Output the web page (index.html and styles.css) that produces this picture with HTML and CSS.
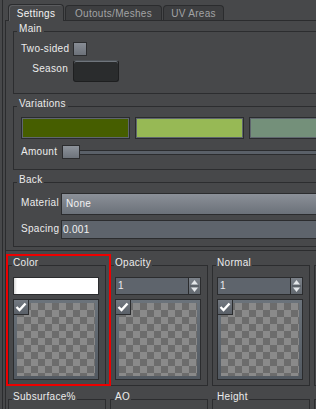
FILE: index.html
```
<!DOCTYPE html>
<html lang="en">
<head>
  <meta charset="UTF-8" />
  <title>Settings</title>
  <link rel="stylesheet" href="styles.css">
</head>
<body>

<div class="window">
  <div class="tabs">
    <div class="tab active">Settings</div>
    <div class="tab">Outouts/Meshes</div>
    <div class="tab">UV Areas</div>
  </div>

  <div class="page">
    <div class="group main">
      <div class="group-title">Main</div>
      <div class="row">
        <span class="label">Two-sided</span>
        <span class="checkbox"></span>
      </div>
      <div class="row season-row">
        <span class="label">Season</span>
        <span class="season"></span>
      </div>
    </div>

    <div class="group variations">
      <div class="group-title">Variations</div>
      <div class="swatches">
        <div class="swatch dark-green"></div>
        <div class="swatch light-green"></div>
        <div class="swatch grey-green"></div>
      </div>
      <div class="row amount">
        <span class="label">Amount</span>
        <div class="slider">
          <span class="handle"></span>
          <span class="track"></span>
        </div>
      </div>
    </div>

    <div class="group back">
      <div class="group-title">Back</div>
      <div class="row">
        <span class="label">Material</span>
        <div class="field combo">None</div>
      </div>
      <div class="row">
        <span class="label">Spacing</span>
        <div class="field flat">0.001</div>
      </div>
    </div>

    <div class="textures">
      <div class="tex-grid">
        <div class="tex">
          <div class="group-title">Color</div>
          <div class="color-field"></div>
          <div class="preview">
            <div class="checker"></div>
            <span class="check"><svg width="14" height="14" viewBox="0 0 14 14"><polyline points="2.5,7 5.5,10 11.5,3.5" fill="none" stroke="#fff" stroke-width="2.4"/></svg></span>
          </div>
        </div>
        <div class="tex">
          <div class="group-title">Opacity</div>
          <div class="num">
            <span>1</span>
            <span class="spin"><svg width="11" height="16" viewBox="0 0 11 16"><polygon points="5.5,2 9,6.5 2,6.5" fill="#e4e7ea"/><line x1="1" y1="8" x2="10" y2="8" stroke="#4a5057"/><polygon points="2,9.5 9,9.5 5.5,14" fill="#e4e7ea"/></svg></span>
          </div>
          <div class="preview">
            <div class="checker"></div>
            <span class="check"><svg width="14" height="14" viewBox="0 0 14 14"><polyline points="2.5,7 5.5,10 11.5,3.5" fill="none" stroke="#fff" stroke-width="2.4"/></svg></span>
          </div>
        </div>
        <div class="tex">
          <div class="group-title">Normal</div>
          <div class="num">
            <span>1</span>
            <span class="spin"><svg width="11" height="16" viewBox="0 0 11 16"><polygon points="5.5,2 9,6.5 2,6.5" fill="#e4e7ea"/><line x1="1" y1="8" x2="10" y2="8" stroke="#4a5057"/><polygon points="2,9.5 9,9.5 5.5,14" fill="#e4e7ea"/></svg></span>
          </div>
          <div class="preview">
            <div class="checker"></div>
            <span class="check"><svg width="14" height="14" viewBox="0 0 14 14"><polyline points="2.5,7 5.5,10 11.5,3.5" fill="none" stroke="#fff" stroke-width="2.4"/></svg></span>
          </div>
        </div>
        <div class="tex">
          <div class="group-title blank"></div>
          <div class="num"></div>
          <div class="preview">
            <div class="checker"></div>
          </div>
        </div>

        <div class="tex short"><div class="group-title">Subsurface%</div></div>
        <div class="tex short"><div class="group-title">AO</div></div>
        <div class="tex short"><div class="group-title">Height</div></div>
        <div class="tex short"><div class="group-title blank"></div></div>
      </div>
      <div class="highlight"></div>
    </div>
  </div>
</div>

</body>
</html>
```

FILE: styles.css
```
body {
  margin: 0;
  height: 409px;
  overflow: hidden;
  background: #47484a;
  color: #ececec;
  font: 10px/12px "Liberation Sans", Arial, sans-serif;
  letter-spacing: 0.3px;
  white-space: nowrap;
}
.window {
  margin-left: 2px;
  border-left: 1px solid #2b2c2e;
  height: 409px;
}
.tabs {
  display: flex;
  align-items: flex-end;
  gap: 1px;
  height: 16px;
  padding: 4px 0 0 5px;
}
.tab {
  box-sizing: border-box;
  height: 15px;
  padding-top: 2px;
  border: 1px solid #2b2c2e;
  border-bottom: 0;
  border-radius: 4px 4px 0 0;
  background: #3d3e40;
  color: #a2a3a5;
  text-align: center;
}
.tab:nth-child(1) { width: 56px; }
.tab:nth-child(2) { width: 97px; }
.tab:nth-child(3) { width: 61px; }
.tab.active {
  position: relative;
  height: 17px;
  margin-bottom: -1px;
  padding-top: 3px;
  background: #47484a;
  color: #f4f4f4;
  box-shadow: inset 1px 1px 0 #5b5c5f;
}
.page {
  margin-left: 2px;
  border-left: 1px solid #2b2c2e;
  border-top: 1px solid #2b2c2e;
  height: 400px;
}
.group {
  margin: 10px -40px 0 7px;
  border: 1px solid #2c2d2f;
  padding: 0 0 11px 7px;
}
.group + .group {
  margin-top: 12px;
}
.group-title {
  display: table;
  margin: -9px 0 7px -4px;
  padding: 0 2px;
  background: #47484a;
}
.group-title.blank {
  height: 12px;
  background: none;
}
.row {
  display: flex;
  align-items: center;
  gap: 5px;
}
.row + .row {
  margin-top: 4px;
}
.label {
  flex: none;
}
.main .label {
  width: 47px;
  text-align: right;
}
.checkbox {
  width: 14px;
  height: 14px;
  box-sizing: border-box;
  border: 1px solid #2b2c2e;
  background: linear-gradient(#888d95, #6c7179);
}
.season-row {
  align-items: flex-start;
}
.season-row .label {
  padding-top: 3px;
}
.season {
  width: 46px;
  height: 22px;
  box-sizing: border-box;
  border: 1px solid #1e1f20;
  border-top-color: #50555a;
  border-radius: 3px;
  background: #2a2c2d;
  box-shadow: inset 0 1px 0 #6f757c;
}

.variations {
  padding-bottom: 10px;
}
.swatches {
  display: flex;
  gap: 5px;
}
.swatch {
  flex: none;
  width: 109px;
  height: 22px;
  box-sizing: border-box;
  border: 1px solid #2b2c2e;
  box-shadow: inset 0 0 0 1px #5f666e;
}
.dark-green { background: #465e00; }
.light-green { background: #97b955; }
.grey-green { background: #74907a; }
.amount {
  margin-top: 6px;
}
.amount .label {
  width: 36px;
}
.slider {
  flex: 1;
  display: flex;
  align-items: center;
}
.handle {
  width: 18px;
  height: 14px;
  box-sizing: border-box;
  border: 1px solid #2b2c2e;
  background: linear-gradient(#8d939b, #6d737b);
}
.track {
  flex: 1;
  height: 5px;
  box-sizing: border-box;
  border: 1px solid #2b2c2e;
  border-left: 0;
  background: #5a6068;
}

.back {
  padding-bottom: 7px;
}
.back .row + .row {
  margin-top: 5px;
}
.back .label {
  width: 35px;
  padding-bottom: 2px;
}
.field {
  flex: 1;
  box-sizing: border-box;
  border: 1px solid #2b2c2e;
  color: #f2f2f2;
}
.combo {
  height: 22px;
  line-height: 20px;
  padding-left: 4px;
  background: linear-gradient(#8b9098, #6b7179);
}
.flat {
  height: 19px;
  line-height: 17px;
  padding-left: 1px;
  background: #5e646c;
}

.textures {
  position: relative;
  margin-top: 3px;
  border-top: 1px solid #2b2c2e;
  padding: 14px 0 0 2px;
}
.tex-grid {
  display: grid;
  grid-template-columns: repeat(4, 98px);
  column-gap: 4px;
  row-gap: 13px;
}
.tex {
  box-sizing: border-box;
  border: 1px solid #2c2d2f;
  padding: 0 6px 5px 4px;
}
.tex .group-title {
  margin: -9px 0 8px -1px;
  padding: 0 1px;
}
.tex.short {
  height: 30px;
}
.color-field {
  height: 18px;
  box-sizing: border-box;
  border: 1px solid #2b2c2e;
  background: linear-gradient(90deg, #d6d6d6, #fff 3px);
}
.num {
  display: flex;
  height: 18px;
  box-sizing: border-box;
  border: 1px solid #2b2c2e;
  background: #5e646c;
}
.num span {
  flex: 1;
  padding-left: 2px;
  line-height: 16px;
}
.num .spin {
  flex: none;
  width: 12px;
  padding: 0;
  box-sizing: border-box;
  border-left: 1px solid #2b2c2e;
  background: linear-gradient(#7b8189, #62686f);
}
.spin svg {
  display: block;
}
.preview {
  position: relative;
  margin-top: 4px;
  height: 81px;
  box-sizing: border-box;
  border: 1px solid #2b2c2e;
  padding: 3px;
  background: linear-gradient(#6b737b, #525961);
}
.checker {
  height: 100%;
  background: repeating-conic-gradient(#6c6c6c 0 25%, #8a8a8a 0 50%) 0 0 / 14px 14px;
}
.check {
  position: absolute;
  top: -1px;
  left: -1px;
  width: 16px;
  height: 16px;
  box-sizing: border-box;
  border: 1px solid #2b2c2e;
  background: linear-gradient(#737981, #5a6068);
}
.check svg {
  display: block;
}
.highlight {
  position: absolute;
  left: 0;
  top: 3px;
  width: 105px;
  height: 132px;
  box-sizing: border-box;
  border: 2px solid #ee0000;
}
```
